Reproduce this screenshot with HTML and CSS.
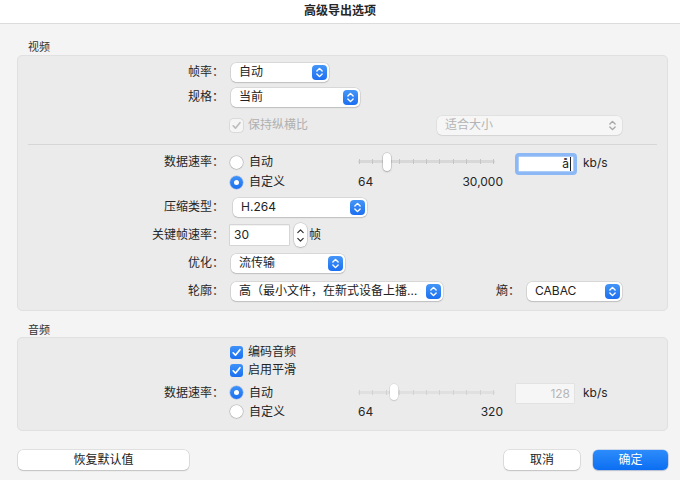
FILE: index.html
```html
<!DOCTYPE html>
<html lang="zh-CN">
<head>
<meta charset="utf-8">
<title>高级导出选项</title>
<link rel="stylesheet" href="styles.css">
</head>
<body>
<svg class="defs" width="0" height="0" aria-hidden="true">
  <symbol id="ud" viewBox="0 0 16 16"><path d="M5.2 6.4L8 3.6L10.8 6.4M5.2 9.6L8 12.4L10.8 9.6" fill="none" stroke="currentColor" stroke-width="1.5" stroke-linecap="round" stroke-linejoin="round"/></symbol>
  <symbol id="chk" viewBox="0 0 14 14"><path d="M3.4 7.3L5.9 9.9L10.7 4" fill="none" stroke="currentColor" stroke-width="1.8" stroke-linecap="round" stroke-linejoin="round"/></symbol>
  <symbol id="up" viewBox="0 0 10 6"><path d="M2 4.8L5 1.8L8 4.8" fill="none" stroke="currentColor" stroke-width="1.4" stroke-linecap="round" stroke-linejoin="round"/></symbol>
  <symbol id="down" viewBox="0 0 10 6"><path d="M2 1.2L5 4.2L8 1.2" fill="none" stroke="currentColor" stroke-width="1.4" stroke-linecap="round" stroke-linejoin="round"/></symbol>
</svg>

<header class="titlebar">高级导出选项</header>

<main class="content">
  <div class="group-label">视频</div>
  <section class="panel video">
    <div class="row">
      <span class="lbl">帧率：</span>
      <div class="popup w-fps"><span class="val">自动</span><span class="arrows"><svg viewBox="0 0 16 16"><use href="#ud"/></svg></span></div>
    </div>
    <div class="row mt5">
      <span class="lbl">规格：</span>
      <div class="popup w-size"><span class="val">当前</span><span class="arrows"><svg viewBox="0 0 16 16"><use href="#ud"/></svg></span></div>
    </div>
    <div class="row mt8 indent">
      <label class="opt"><span class="check disabled"><svg viewBox="0 0 14 14"><use href="#chk"/></svg></span><span class="dim">保持纵横比</span></label>
      <div class="popup disabled w-fit"><span class="val">适合大小</span><span class="arrows"><svg viewBox="0 0 16 16"><use href="#ud"/></svg></span></div>
    </div>
    <hr class="sep">
    <div class="rate video-rate">
      <span class="lbl">数据速率：</span>
      <div class="radios">
        <label class="opt"><span class="radio"></span>自动</label>
        <label class="opt"><span class="radio on"></span>自定义</label>
      </div>
      <div class="slider">
        <div class="track">
          <span class="ticks"><i></i><i></i><i></i><i></i><i></i><i></i><i></i><i></i><i></i><i></i><i></i></span>
          <span class="knob" style="left:25px"></span>
        </div>
        <div class="range"><span>64</span><span>30,000</span></div>
      </div>
      <div class="field focus"><span>å</span><span class="caret"></span></div>
      <span class="unit">kb/s</span>
    </div>
    <div class="row mt5">
      <span class="lbl">压缩类型：</span>
      <div class="popup w-codec"><span class="val">H.264</span><span class="arrows"><svg viewBox="0 0 16 16"><use href="#ud"/></svg></span></div>
    </div>
    <div class="row mt8">
      <span class="lbl">关键帧速率：</span>
      <div class="field key"><span>30</span></div>
      <div class="stepper"><svg viewBox="0 0 10 6"><use href="#up"/></svg><svg viewBox="0 0 10 6"><use href="#down"/></svg></div>
      <span class="suffix">帧</span>
    </div>
    <div class="row mt8">
      <span class="lbl">优化：</span>
      <div class="popup w-opt"><span class="val">流传输</span><span class="arrows"><svg viewBox="0 0 16 16"><use href="#ud"/></svg></span></div>
    </div>
    <div class="row mt8">
      <span class="lbl">轮廓：</span>
      <div class="popup w-profile"><span class="val">高（最小文件，在新式设备上播…</span><span class="arrows"><svg viewBox="0 0 16 16"><use href="#ud"/></svg></span></div>
      <span class="lbl-inline">熵：</span>
      <div class="popup w-entropy"><span class="val">CABAC</span><span class="arrows"><svg viewBox="0 0 16 16"><use href="#ud"/></svg></span></div>
    </div>
  </section>

  <div class="group-label audio-label">音频</div>
  <section class="panel audio">
    <div class="crow indent">
      <label class="opt"><span class="check"><svg viewBox="0 0 14 14"><use href="#chk"/></svg></span>编码音频</label>
    </div>
    <div class="crow indent">
      <label class="opt"><span class="check"><svg viewBox="0 0 14 14"><use href="#chk"/></svg></span>启用平滑</label>
    </div>
    <div class="rate audio-rate">
      <span class="lbl">数据速率：</span>
      <div class="radios">
        <label class="opt"><span class="radio on"></span>自动</label>
        <label class="opt"><span class="radio"></span>自定义</label>
      </div>
      <div class="slider disabled">
        <div class="track">
          <span class="ticks"><i></i><i></i><i></i><i></i><i></i><i></i><i></i><i></i><i></i><i></i><i></i></span>
          <span class="knob" style="left:32px"></span>
        </div>
        <div class="range"><span>64</span><span>320</span></div>
      </div>
      <div class="field off"><span>128</span></div>
      <span class="unit">kb/s</span>
    </div>
  </section>

  <footer class="buttons">
    <button class="btn reset">恢复默认值</button>
    <span class="spacer"></span>
    <button class="btn cancel">取消</button>
    <button class="btn primary">确定</button>
  </footer>
</main>
</body>
</html>
```

FILE: styles.css
```css
* { box-sizing: border-box; margin: 0; padding: 0; }
html, body { width: 680px; height: 480px; overflow: hidden; }
body {
  background: #f4f4f4;
  font-family: "Inter", "Noto Sans CJK SC", sans-serif;
  font-size: 12px;
  line-height: 20px;
  color: #242424;
}
.defs { position: absolute; width: 0; height: 0; }

.titlebar {
  height: 24px;
  background: #ffffff;
  border-bottom: 1px solid #dcdcdc;
  text-align: center;
  line-height: 22px;
  font-weight: 600;
  font-size: 12px;
  color: #262626;
}

.content { padding: 0 12px 0 17px; }

.group-label {
  font-size: 11px;
  line-height: 14px;
  margin: 16px 0 1px 11px;
  color: #333333;
}
.group-label.audio-label { margin-top: 12px; margin-bottom: 0; }

.panel {
  background: #ebebeb;
  border: 1px solid #e0e0e0;
  border-radius: 5px;
}
.panel.video { padding: 6px 0 9px; }
.panel.audio { padding: 5px 0 9px; }

.row { display: flex; align-items: center; height: 20px; }
.crow { display: flex; align-items: center; height: 18px; }
.mt5 { margin-top: 5px; }
.mt8 { margin-top: 8px; }
.indent { padding-left: 212px; }

.lbl {
  flex: none;
  width: 206px;
  margin-right: 7px;
  text-align: right;
  line-height: 20px;
  color: #262626;
}
.lbl-inline { margin-left: 53px; margin-right: 7px; width: 24px; flex: none; }

.sep {
  border: none;
  height: 1px;
  background: #d6d6d6;
  margin: 9px 10px 7px;
}

/* popup buttons */
.popup {
  flex: none;
  display: flex;
  align-items: center;
  height: 19px;
  background: #ffffff;
  border-radius: 5px;
  box-shadow: 0 0 0 0.5px rgba(0, 0, 0, 0.16), 0 1px 1.5px rgba(0, 0, 0, 0.12);
  padding: 0 2px 0 8px;
  color: #222222;
}
.popup .val { flex: 1; white-space: nowrap; overflow: hidden; }
.popup .arrows {
  flex: none;
  width: 15px;
  height: 15px;
  border-radius: 4px;
  background: linear-gradient(#4596f8, #1c6ff0);
  color: #ffffff;
  display: flex;
  align-items: center;
  justify-content: center;
}
.popup .arrows svg { width: 15px; height: 15px; }
.popup.disabled { background: #f6f6f6; color: #b4b4b4; box-shadow: 0 0 0 0.5px rgba(0, 0, 0, 0.08), 0 1px 1px rgba(0, 0, 0, 0.06); }
.popup.disabled .arrows { background: none; color: #a8a8a8; }

.w-fps { width: 98px; }
.w-size { width: 129px; }
.w-fit { width: 185px; margin-left: auto; margin-right: 45px; }
.w-codec { width: 134px; margin-left: 2px; }
.w-opt { width: 114px; }
.w-profile { width: 212px; }
.w-entropy { width: 95px; }

/* options */
.opt { display: flex; align-items: center; height: 20px; color: #242424; }
.crow .opt { height: 18px; }
.dim { color: #b0b0b0; }

.radio {
  flex: none;
  position: relative;
  width: 13px;
  height: 13px;
  border-radius: 50%;
  background: #ffffff;
  box-shadow: 0 0 0 0.5px rgba(0, 0, 0, 0.22), 0 0.5px 1.5px rgba(0, 0, 0, 0.15);
  margin: 0 6px 0 -1px;
}
.radio.on { background: linear-gradient(#3f92f8, #1a70f0); box-shadow: 0 0 0 0.5px rgba(0, 70, 200, 0.35); }
.radio.on::after {
  content: "";
  position: absolute;
  left: 4px; top: 4px;
  width: 5px; height: 5px;
  border-radius: 50%;
  background: #ffffff;
}

.check {
  flex: none;
  width: 13px;
  height: 13px;
  border-radius: 3px;
  margin: 0 5px 0 0;
  background: linear-gradient(#3f92f8, #1a70f0);
  color: #ffffff;
  display: flex;
  align-items: center;
  justify-content: center;
}
.check svg { width: 13px; height: 13px; }
.check.disabled { background: #f5f5f5; color: #bdbdbd; box-shadow: 0 0 0 0.5px rgba(0, 0, 0, 0.14); }

/* data-rate blocks */
.rate { display: flex; align-items: flex-start; }
.video-rate { --rh: 20px; }
.audio-rate { --rh: 19px; margin-top: 4px; }
.rate .lbl { line-height: var(--rh); }
.rate .opt { height: var(--rh); }
.radios { flex: none; width: 127px; display: flex; flex-direction: column; }

.slider { flex: none; width: 145px; }
.track { position: relative; width: 137px; height: var(--rh); }
.track::before {
  content: "";
  position: absolute;
  left: 0; right: 0;
  top: 8px;
  height: 3px;
  border-radius: 2px;
  background: #d8d8d8;
}
.ticks {
  position: absolute;
  left: 1px; right: 1px;
  top: 7px;
  height: 5px;
  display: flex;
  justify-content: space-between;
}
.ticks i { width: 1px; height: 5px; background: #c4c4c4; }
.knob {
  position: absolute;
  top: 1px;
  width: 8px;
  height: 18px;
  border-radius: 4px;
  background: #ffffff;
  box-shadow: 0 0 0 0.5px rgba(0, 0, 0, 0.2), 0 1px 2px rgba(0, 0, 0, 0.2);
}
.slider.disabled .track::before { background: #e0e0e0; }
.slider.disabled .ticks i { background: #d2d2d2; }
.slider.disabled .knob { height: 16px; box-shadow: 0 0 0 0.5px rgba(0, 0, 0, 0.1), 0 1px 1.5px rgba(0, 0, 0, 0.1); }
.range { display: flex; justify-content: space-between; line-height: var(--rh); height: var(--rh); color: #262626; }

.field {
  flex: none;
  display: flex;
  align-items: center;
  background: #ffffff;
}
.field.focus {
  width: 62px;
  height: 22px;
  margin: 1px 0 0 12px;
  border: 3px solid #8cb8f5;
  border-radius: 4px;
  justify-content: flex-end;
  padding-right: 3px;
  box-shadow: inset 0 0 0 0.5px #5b9bf0;
}
.caret { width: 1px; height: 14px; background: #222222; margin-left: 1px; }
.field.key {
  width: 59px;
  height: 20px;
  margin-left: -1px;
  padding-left: 4px;
  box-shadow: 0 0 0 0.5px rgba(0, 0, 0, 0.18), inset 0 0.5px 0 rgba(0, 0, 0, 0.1);
}
.field.off {
  width: 58px;
  height: 19px;
  margin: 1px 0 0 13px;
  background: #f6f6f6;
  color: #b6b6b6;
  justify-content: flex-end;
  padding-right: 4px;
  box-shadow: 0 0 0 0.5px rgba(0, 0, 0, 0.07);
}
.unit { flex: none; line-height: 22px; margin-left: 6px; }
.audio-rate .unit { margin-left: 9px; line-height: 20px; }

.stepper {
  flex: none;
  width: 13px;
  height: 24px;
  margin-left: 5px;
  border-radius: 6px;
  background: #ffffff;
  box-shadow: 0 0 0 0.5px rgba(0, 0, 0, 0.18), 0 1px 1.5px rgba(0, 0, 0, 0.12);
  display: flex;
  flex-direction: column;
  align-items: center;
  justify-content: center;
  gap: 3px;
  color: #333333;
}
.stepper svg { width: 9px; height: 6px; }
.suffix { margin-left: 2px; }

/* buttons */
.buttons { display: flex; align-items: center; margin-top: 19px; padding-left: 1px; }
.spacer { flex: 1; }
.btn {
  font: inherit;
  height: 20px;
  line-height: 20px;
  border: none;
  border-radius: 5px;
  background: #ffffff;
  color: #222222;
  box-shadow: 0 0 0 0.5px rgba(0, 0, 0, 0.16), 0 1px 1.5px rgba(0, 0, 0, 0.14);
}
.btn.reset { width: 171px; }
.btn.cancel { width: 76px; }
.btn.primary {
  width: 75px;
  margin-left: 13px;
  background: linear-gradient(#2d8cfa, #0b6ef2);
  color: #ffffff;
  box-shadow: 0 0 0 0.5px rgba(0, 60, 180, 0.3), 0 1px 1.5px rgba(0, 0, 0, 0.12);
}
```
